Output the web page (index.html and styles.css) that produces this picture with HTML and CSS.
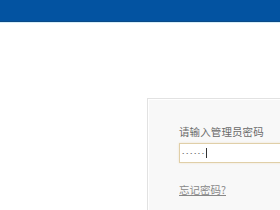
FILE: index.html
```html
<!DOCTYPE html>
<html>
<head>
<meta charset="utf-8">
<link rel="stylesheet" href="styles.css">
</head>
<body>
<div class="topbar"></div>
<div class="topline"></div>
<div class="main">
  <div class="panel">
    <div class="label">请输入管理员密码</div>
    <div class="input"><span class="dots">••••••</span><span class="caret"></span></div>
    <a class="forgot" href="#">忘记密码?</a>
  </div>
</div>
</body>
</html>
```
FILE: styles.css
```css
html, body { margin: 0; padding: 0; background: #fff; overflow: hidden; }
body { width: 280px; height: 210px; font-family: "Noto Sans CJK SC", "Liberation Sans", sans-serif; }
.topbar { height: 21px; background: #0353a1; border-bottom: 1px solid #0b4a86; }
.topline { height: 1px; background: #d5eefa; }
.main { padding: 75px 0 0 147px; height: 112px; overflow: hidden; }
.panel {
  width: 200px;
  border: 1px solid #e2e2e2;
  box-shadow: inset 1px 1px 0 #fff;
  background: #f8f8f8;
  height: 140px;
  padding: 26px 0 0 31px;
}
.label { font-size: 10.5px; line-height: 14px; color: #6a6a6a; letter-spacing: 0.1px; }
.input {
  width: 150px;
  margin-top: 4px;
  height: 18px;
  border: 1px solid #e0cfa8;
  background: #fff;
  display: flex;
  align-items: center;
  padding-left: 2px;
  box-shadow: 0 0 2px #f0e4cc;
}
.dots { font-size: 4px; color: #666; letter-spacing: 1.6px; font-family: "DejaVu Sans", sans-serif; }
.caret { width: 1px; height: 10px; background: #333; margin-left: 0; }
.forgot { display: inline-block; margin-top: 21px; font-size: 10.5px; line-height: 12px; color: #888; text-decoration: underline; }
```
